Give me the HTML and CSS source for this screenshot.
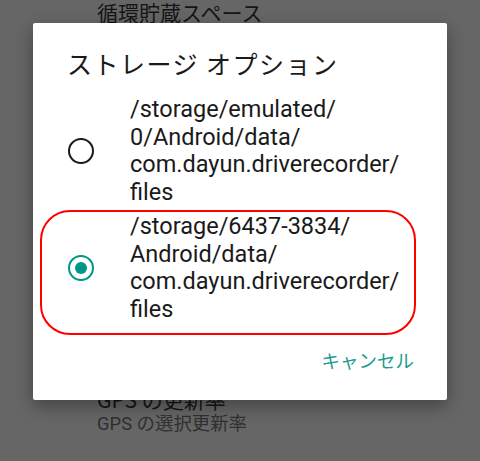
FILE: index.html
```html
<!DOCTYPE html>
<html>
<head>
    <meta charset="utf-8">
    <title>ストレージ オプション</title>
    <link rel="stylesheet" href="styles.css">
</head>
<body>
    <!-- settings list, dimmed behind the dialog -->
    <ul class="prefs">
        <li class="pref pref-top">
            <span class="pref-title">循環貯蔵スペース</span>
        </li>
        <li class="pref pref-gps">
            <span class="pref-title">GPS の更新率</span>
            <span class="pref-summary">GPS の選択更新率</span>
        </li>
    </ul>

    <div class="dialog">
        <h2 class="dialog-title">ストレージ オプション</h2>
        <ul class="options">
            <li class="option">
                <span class="radio"></span>
                <span class="option-text">/storage/emulated/<br>0/Android/data/<br>com.dayun.driverecorder/<br>files</span>
            </li>
            <li class="option option-checked">
                <span class="radio"></span>
                <span class="option-text">/storage/6437-3834/<br>Android/data/<br>com.dayun.driverecorder/<br>files</span>
            </li>
        </ul>
        <div class="dialog-buttons">
            <button class="btn-cancel">キャンセル</button>
        </div>
    </div>
</body>
</html>
```

FILE: styles.css
```css
/* Page with the dim scrim colour already applied */
body {
    margin: 0;
    width: 480px;
    height: 461px;
    overflow: hidden;
    position: relative;
    background-color: #666666;
    font-family: "Noto Sans CJK JP", "Noto Sans", sans-serif;
}

/* Background settings list */
.prefs {
    list-style: none;
    margin: 0;
    padding: 0 0 0 97px;
}

.pref {
    display: flex;
    flex-direction: column;
}

.pref-top {
    padding-top: 1px;
}

.pref-top .pref-title {
    line-height: 22px;
}

.pref-gps {
    margin-top: 363px;
}

.pref-title {
    font-size: 21px;
    line-height: 26px;
    color: #151515;
}

.pref-summary {
    font-family: Roboto, "Noto Sans CJK JP", sans-serif;
    font-size: 18.4px;
    line-height: 24px;
    color: #303030;
}

/* The dialog sits over the list */
.dialog {
    position: absolute;
    top: 23px;
    left: 33px;
    width: 414px;
    height: 377px;
    background-color: #fff;
    border-radius: 2px;
    box-shadow: 0 6px 18px rgba(0, 0, 0, 0.35);
    display: flex;
    flex-direction: column;
}

.dialog-title {
    margin: 0;
    padding: 24px 30px 0 34px;
    font-size: 25px;
    font-weight: normal;
    letter-spacing: 1.5px;
    line-height: 32px;
    color: #1a1a1a;
}

/* Radio options */
.options {
    list-style: none;
    margin: 14px 31px 0 7px;
    padding: 0;
}

.option {
    position: relative;
    display: flex;
    align-items: center;
    padding: 3px 0;
}

.radio {
    flex: none;
    box-sizing: border-box;
    width: 26px;
    height: 26px;
    margin-left: 28px;
    margin-right: 36px;
    border: 2.7px solid #1a1a1a;
    border-radius: 50%;
    display: flex;
    align-items: center;
    justify-content: center;
}

.option-checked .radio {
    border-color: #009688;
}

.option-checked .radio::before {
    content: "";
    width: 12px;
    height: 12px;
    border-radius: 50%;
    background-color: #009688;
}

/* red highlight drawn round the chosen option */
.option-checked::after {
    content: "";
    position: absolute;
    top: 0;
    bottom: -8px;
    left: 0;
    right: 0;
    border: 2px solid #ff0000;
    border-radius: 30px;
}

.option-text {
    font-family: Roboto, sans-serif;
    font-size: 23.5px;
    line-height: 27.7px;
    color: #1a1a1a;
}

/* Buttons */
.dialog-buttons {
    display: flex;
    justify-content: flex-end;
    padding: 20px 33px 0 0;
}

.btn-cancel {
    background: none;
    border: none;
    padding: 0;
    font-family: "Noto Sans CJK JP", sans-serif;
    font-size: 18.5px;
    line-height: 26px;
    color: #1f9c8f;
    cursor: pointer;
}
```
